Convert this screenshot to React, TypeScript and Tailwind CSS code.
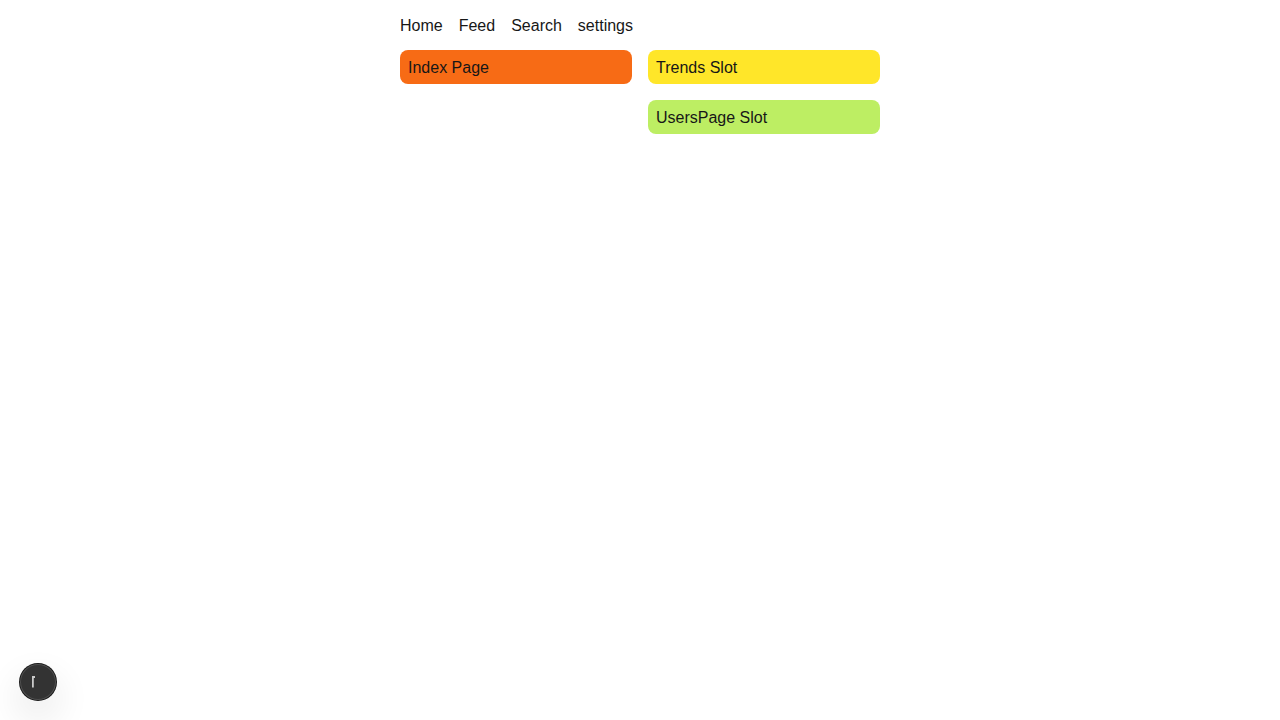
import React from "react";

const links = ["Home", "Feed", "Search", "settings"];

function Slot({ className, children }: { className: string; children: React.ReactNode }) {
  return <section className={`rounded-lg px-2 pt-2 pb-1.5 ${className}`}>{children}</section>;
}

export default function App() {
  return (
    <div className="min-h-screen bg-white font-['Liberation_Sans',Arial,sans-serif] text-base leading-5 text-[#171717]">
      <div className="mx-auto max-w-[480px]">
        <nav aria-label="Main" className="flex gap-4 pt-4 pb-3.5">
          {links.map((label) => (
            <a key={label} href={`#${label.toLowerCase()}`}>
              {label}
            </a>
          ))}
        </nav>
        <main className="grid grid-cols-2 items-start gap-4">
          <Slot className="bg-[#f76b15]">Index Page</Slot>
          <div className="flex flex-col gap-4">
            <Slot className="bg-[#ffe629]">Trends Slot</Slot>
            <Slot className="bg-[#bdee63]">UsersPage Slot</Slot>
          </div>
        </main>
      </div>
      <button
        type="button"
        aria-label="Open developer tools"
        className="fixed bottom-5 left-5 size-9 rounded-full bg-[#333333] shadow-[0_0_0_1px_#171717,inset_0_0_0_1px_rgba(255,255,255,0.14),0_16px_32px_8px_rgba(0,0,0,0.06)]"
      >
        <svg viewBox="0 0 36 36" className="size-9" fill="none" aria-hidden="true">
          <path d="M12.9 23.6V13H15" stroke="#c9c9c9" strokeWidth="1.8" />
        </svg>
      </button>
    </div>
  );
}
